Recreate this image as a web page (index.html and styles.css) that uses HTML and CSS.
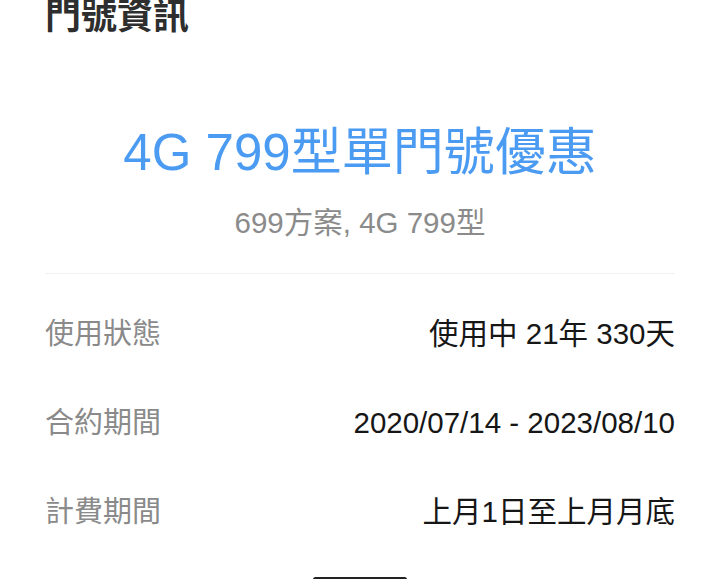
FILE: index.html
```html
<!DOCTYPE html>
<html lang="zh-Hant">
<head>
<meta charset="utf-8">
<title>門號資訊</title>
<link rel="stylesheet" href="styles.css">
</head>
<body>
<div class="page">
  <h1 class="heading">門號資訊</h1>
  <section class="plan">
    <div class="plan-name">4G 799型單門號優惠</div>
    <div class="plan-sub">699方案, 4G 799型</div>
  </section>
  <dl class="info">
    <div class="row"><dt class="label">使用狀態</dt><dd class="value">使用中 21年 330天</dd></div>
    <div class="row"><dt class="label">合約期間</dt><dd class="value">2020/07/14 - 2023/08/10</dd></div>
    <div class="row"><dt class="label">計費期間</dt><dd class="value">上月1日至上月月底</dd></div>
  </dl>
</div>
<div class="home-indicator"></div>
</body>
</html>
```
FILE: styles.css
```css
html, body {
  margin: 0;
  padding: 0;
  background: #ffffff;
}
body {
  font-family: "Liberation Sans", "Noto Sans CJK TC", sans-serif;
  overflow: hidden;
}
.page {
  padding: 0 45px;
}
.heading {
  margin: -5px 0 0 0;
  font-family: "Noto Sans CJK TC", sans-serif;
  font-size: 36px;
  line-height: 36px;
  font-weight: 700;
  color: #2e2e2e;
}
.plan {
  margin-top: 92px;
  padding-bottom: 30px;
  border-bottom: 1px solid #f1f1f1;
  text-align: center;
}
.plan-name {
  font-size: 51px;
  line-height: 60px;
  color: #4a9bf1;
}
.plan-sub {
  margin-top: 20px;
  font-size: 29.5px;
  line-height: 40px;
  color: #8b8b8b;
}
.info {
  margin: 15px 0 0 0;
  padding: 0;
}
.row {
  display: flex;
  justify-content: space-between;
  align-items: center;
  height: 89px;
}
.label {
  font-size: 29px;
  line-height: 40px;
  color: #8a8a8a;
  margin: 0;
}
.value {
  font-size: 29.5px;
  line-height: 40px;
  color: #161616;
  margin: 0;
}
.home-indicator {
  position: fixed;
  left: 50%;
  bottom: -3px;
  width: 94px;
  height: 5px;
  margin-left: -47px;
  border-radius: 3px;
  background: #222;
}
```
